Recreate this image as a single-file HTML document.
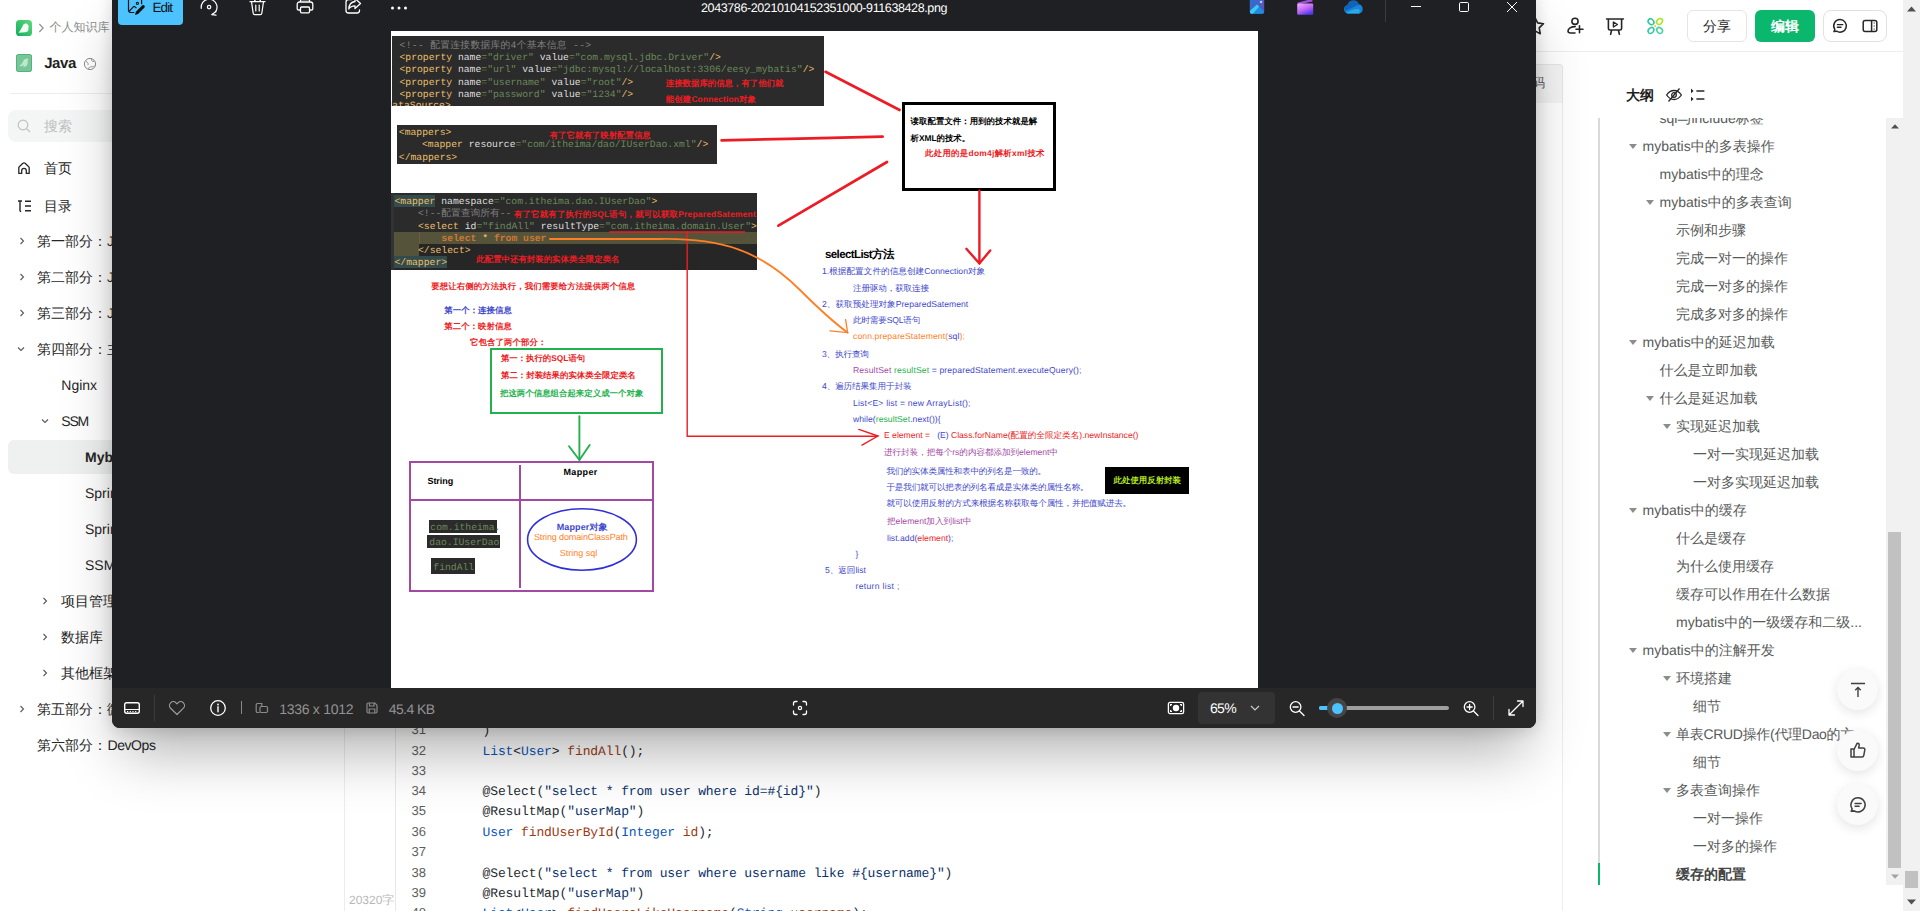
<!DOCTYPE html>
<html lang="zh">
<head>
<meta charset="utf-8">
<title>Java</title>
<style>
*{box-sizing:border-box;margin:0;padding:0}
html,body{width:1920px;height:911px;overflow:hidden;background:#fff;font-family:"Liberation Sans",sans-serif;}
body{position:relative;color:#262626;font-size:14px;text-rendering:geometricPrecision;}
.abs{position:absolute}
svg{position:absolute;overflow:visible}
/* ---------- left sidebar ---------- */
#side{position:absolute;left:0;top:0;width:345px;height:911px;background:#fff;border-right:1px solid #ececec}
#side .t{position:absolute;white-space:nowrap;height:20px;line-height:20px;font-size:14px;color:#262626}
#side .ar{position:absolute;width:10px;height:10px}
/* ---------- code ---------- */
#code{position:absolute;left:396px;top:0;width:1140px;height:911px}
#gut{position:absolute;left:395px;top:0;width:1px;height:911px;background:#e8e8e8}
.ln{position:absolute;left:411.5px;width:20px;height:20px;line-height:20px;font-size:13px;color:#5e5e5e;white-space:nowrap}
.cl{position:absolute;left:482.5px;height:20px;line-height:20px;font-family:"Liberation Mono",monospace;font-size:13px;letter-spacing:-.1px;white-space:pre;color:#24292e}
.cl .k{color:#0a54b8}.cl .f{color:#9a3a10}.cl .s{color:#0a3069}
/* ---------- outline ---------- */
.ol{position:absolute;height:20px;line-height:20px;font-size:14px;color:#585a5a;white-space:nowrap}
.tri{position:absolute;width:0;height:0;border-left:4px solid transparent;border-right:4px solid transparent;border-top:5px solid #8c8c8c}
.fab{position:absolute;width:41px;height:41px;border-radius:50%;background:#fafafa;box-shadow:0 3px 12px rgba(0,0,0,.11)}
/* ---------- viewer ---------- */
#viewer{position:absolute;left:112px;top:-10px;width:1424px;height:737.5px;background:#1f2023;border-radius:8px;box-shadow:0 34px 54px -10px rgba(0,0,0,.30),0 2px 16px rgba(0,0,0,.14);overflow:hidden}
.vt{position:absolute;white-space:nowrap;color:#fff;font-size:14px;line-height:20px;height:20px}
/* diagram text */
.d{position:absolute;white-space:nowrap;font-size:8.4px;line-height:12px;height:12px;font-weight:bold}
.dn{position:absolute;white-space:nowrap;font-size:8.6px;line-height:12px;height:12px;color:#3f48cc}
.m{position:absolute;white-space:pre;font-family:"Liberation Mono",monospace;font-size:9.74px;line-height:12px;height:12px;color:#a9b7c6;margin-top:1.3px}
.m .t{color:#e8bf6a}.m .a{color:#dcdcdc}.m .v{color:#6a8759}.m .c{color:#808080}
.red{color:#ed1c24}.blu{color:#3f48cc}.grn{color:#22b14c}.org{color:#ff7f27}.pur{color:#a349a4}
</style>
</head>
<body>
<div id="side">
  <!-- logo -->
  <svg style="left:16px;top:20px" width="16" height="16" viewBox="0 0 16 16"><defs><linearGradient id="lg1" x1="1" y1="0" x2="0" y2="1"><stop offset="0" stop-color="#62da7c"/><stop offset="1" stop-color="#0fae5e"/></linearGradient></defs><rect width="16" height="16" rx="3.600" fill="url(#lg1)"/><path d="M2.500 12.700C5 10 6 6.500 7.600 4.200c1-.8 2.600-.9 3.600-.4l1.500 2.300l-.4 4.500c-.6 1-1.600 1.500-2.800 1.600z" fill="#f2fbf5"/></svg>
  <svg style="left:37px;top:22px" width="8" height="12" viewBox="0 0 8 12"><path d="M2.300 2L6.200 6L2.300 10" fill="none" stroke="#8a8f8d" stroke-width="1.100"/></svg>
  <div class="t" style="width:60.02px;text-align-last:justify;left:49.5px;top:17.300px;color:#8a8f8d;font-size:12px">个人知识库</div>
  <!-- book -->
  <svg style="left:16px;top:54px" width="16" height="18" viewBox="0 0 16 18"><rect x=".5" y=".5" width="15" height="17" rx="1.600" fill="#76c797" stroke="#58b07e"/><path d="M2 12.700c2.500-1.200 4-3.600 5.200-6.200c.8-1.600 2.600-2.600 4.400-2.200l1.500 1.200l-1.200.6c.6 2 .2 4-1 5.600c-1 1.200-2.500 1.600-4.400 1.500l1-1.600c-1.500 1-3.500 1.400-5.500 1.100z" fill="#bce9cb" stroke="#6cbd8c" stroke-width=".5"/></svg>
  <div class="t" style="letter-spacing:-0.444px;width:31.62px;text-align-last:justify;left:44.2px;top:54px;font-size:15px;font-weight:bold;color:#1f1f1f">Java</div>
  <svg style="left:83px;top:57px" width="14" height="14" viewBox="0 0 14 14"><circle cx="7" cy="7" r="5.6" fill="none" stroke="#8a8f8d" stroke-width="1"/><path d="M3 4.5c1.5.5 2.5 1.5 2 3.5M8.5 1.8c-.5 1.7.5 2.7 2.5 2.7M5.5 12c.3-1.6 1.6-2.6 3.4-2.2c1 .2 1.8-.2 2.6-1.2" fill="none" stroke="#8a8f8d" stroke-width=".9"/></svg>
  <div class="abs" style="left:10px;top:93px;width:335px;height:1px;background:#ededed"></div>
  <!-- search -->
  <div class="abs" style="left:8px;top:110px;width:337px;height:32px;border-radius:8px;background:#f4f5f5"></div>
  <svg style="left:16px;top:118px" width="16" height="16" viewBox="0 0 16 16"><circle cx="7" cy="7" r="4.8" fill="none" stroke="#bfc2c1" stroke-width="1.2"/><path d="M10.6 10.6L14 14" stroke="#bfc2c1" stroke-width="1.2"/></svg>
  <div class="t" style="width:28.02px;text-align-last:justify;left:44px;top:116px;color:#bec0bf">搜索</div>
  <!-- nav -->
  <svg style="left:17px;top:161px" width="14" height="14" viewBox="0 0 14 14"><path d="M1.800 12.400V6.800c0-.600.200-1 .700-1.400L5.900 2.300c.600-.5 1.600-.5 2.200 0l3.400 3.100c.500.400.700.800.700 1.400v5.600H9.300V9.700a2.300 2.300 0 0 0-4.600 0v2.700z" fill="none" stroke="#262626" stroke-width="1.300" stroke-linejoin="round"/></svg>
  <div class="t" style="width:28.02px;text-align-last:justify;left:44px;top:158px">首页</div>
  <svg style="left:17px;top:199px" width="15" height="14" viewBox="0 0 15 14"><path d="M1 2h4M3 2v9.5c0 .8.4 1 1.2 1M8 2.2h6M8 7h6M8 11.8h6" fill="none" stroke="#262626" stroke-width="1.4"/></svg>
  <div class="t" style="width:28.02px;text-align-last:justify;left:44px;top:196px">目录</div>
  <!-- tree -->
  <div class="abs" style="left:8px;top:440px;width:337px;height:34px;border-radius:6px;background:#eff0f0"></div>
  <svg class="ar" style="left:17px;top:236px" viewBox="0 0 10 10"><path d="M3.5 2L6.5 5L3.5 8" fill="none" stroke="#585a5a" stroke-width="1.1"/></svg>
  <div class="t" style="width:127.60px;text-align-last:justify;left:37px;top:231px">第一部分：Java基础</div>
  <svg class="ar" style="left:17px;top:272px" viewBox="0 0 10 10"><path d="M3.5 2L6.5 5L3.5 8" fill="none" stroke="#585a5a" stroke-width="1.1"/></svg>
  <div class="t" style="width:128.13px;text-align-last:justify;left:37px;top:267px">第二部分：JavaWeb</div>
  <svg class="ar" style="left:17px;top:308px" viewBox="0 0 10 10"><path d="M3.5 2L6.5 5L3.5 8" fill="none" stroke="#585a5a" stroke-width="1.1"/></svg>
  <div class="t" style="width:118.27px;text-align-last:justify;left:37px;top:303px">第三部分：JavaEE</div>
  <svg class="ar" style="left:16px;top:344px" viewBox="0 0 10 10"><path d="M2 3.5L5 6.5L8 3.5" fill="none" stroke="#585a5a" stroke-width="1.1"/></svg>
  <div class="t" style="width:126.02px;text-align-last:justify;left:37px;top:339px">第四部分：主流框架</div>
  <div class="t" style="letter-spacing:0.001px;width:35.82px;text-align-last:justify;left:61.3px;top:375px">Nginx</div>
  <svg class="ar" style="left:40px;top:416px" viewBox="0 0 10 10"><path d="M2 3.5L5 6.5L8 3.5" fill="none" stroke="#585a5a" stroke-width="1.1"/></svg>
  <div class="t" style="letter-spacing:-1.181px;width:26.82px;text-align-last:justify;left:61.3px;top:411px">SSM</div>
  <div class="t" style="width:52.15px;text-align-last:justify;left:85px;top:447px;font-weight:bold">Mybatis</div>
  <div class="t" style="width:40.49px;text-align-last:justify;left:85px;top:483px">Spring</div>
  <div class="t" style="width:71.61px;text-align-last:justify;left:85px;top:519px">SpringMVC</div>
  <div class="t" style="width:58.36px;text-align-last:justify;left:85px;top:555px">SSM整合</div>
  <svg class="ar" style="left:40px;top:596px" viewBox="0 0 10 10"><path d="M3.5 2L6.5 5L3.5 8" fill="none" stroke="#585a5a" stroke-width="1.1"/></svg>
  <div class="t" style="width:56.02px;text-align-last:justify;left:61px;top:591px">项目管理</div>
  <svg class="ar" style="left:40px;top:632px" viewBox="0 0 10 10"><path d="M3.5 2L6.5 5L3.5 8" fill="none" stroke="#585a5a" stroke-width="1.1"/></svg>
  <div class="t" style="width:42.02px;text-align-last:justify;left:61px;top:627px">数据库</div>
  <svg class="ar" style="left:40px;top:668px" viewBox="0 0 10 10"><path d="M3.5 2L6.5 5L3.5 8" fill="none" stroke="#585a5a" stroke-width="1.1"/></svg>
  <div class="t" style="width:56.02px;text-align-last:justify;left:61px;top:663px">其他框架</div>
  <svg class="ar" style="left:17px;top:704px" viewBox="0 0 10 10"><path d="M3.5 2L6.5 5L3.5 8" fill="none" stroke="#585a5a" stroke-width="1.1"/></svg>
  <div class="t" style="width:112.02px;text-align-last:justify;left:37px;top:699px">第五部分：微服务</div>
  <div class="t" style="width:70.02px;text-align-last:justify;left:37px;top:735px">第六部分：</div><div class="t" style="letter-spacing:-0.430px;width:48.02px;text-align-last:justify;left:107.5px;top:735px">DevOps</div>
</div>
<div class="abs" style="left:349px;top:891px;font-size:12px;line-height:18px;color:#b8b8b8;white-space:nowrap">20320字</div>
<div id="gut"></div>

<!-- code -->
<div class="ln" style="top:720.4px">31</div>
<div class="cl" style="top:721.4px">)</div>
<div class="ln" style="top:740.7px">32</div>
<div class="cl" style="top:741.7px"><span class="k">List</span>&lt;<span class="k">User</span>&gt; <span class="f">findAll</span>();</div>
<div class="ln" style="top:760.7px">33</div>
<div class="ln" style="top:780.7px">34</div>
<div class="cl" style="top:781.7px">@Select(<span class="s">"select * from user where id=#{id}"</span>)</div>
<div class="ln" style="top:801.4px">35</div>
<div class="cl" style="top:802.4px">@ResultMap(<span class="s">"userMap"</span>)</div>
<div class="ln" style="top:822.1px">36</div>
<div class="cl" style="top:823.1px"><span class="k">User</span> <span class="f">findUserById</span>(<span class="k">Integer</span> <span class="f">id</span>);</div>
<div class="ln" style="top:842.1px">37</div>
<div class="ln" style="top:863.2px">38</div>
<div class="cl" style="top:864.2px">@Select(<span class="s">"select * from user where username like #{username}"</span>)</div>
<div class="ln" style="top:883.1px">39</div>
<div class="cl" style="top:884.1px">@ResultMap(<span class="s">"userMap"</span>)</div>
<div class="ln" style="top:903.4px">40</div>
<div class="cl" style="top:904.4px"><span class="k">List</span>&lt;<span class="k">User</span>&gt; <span class="f">findUsersLikeUsername</span>(<span class="k">String</span> <span class="f">username</span>);</div>
<!-- header right -->
<div class="abs" style="left:1536px;top:51px;width:367px;height:1px;background:#ededed"></div>
<div class="abs" style="left:1530px;top:64px;width:33px;height:39px;background:#f4f4f4;border:1px solid #e6e6e6;border-bottom:none;border-top-right-radius:4px"></div>
<div class="abs" style="left:1562px;top:103px;width:1px;height:808px;background:#ececec"></div>
<div class="abs" style="left:1533px;top:74px;font-size:13px;line-height:18px;color:#595959;width:12px;overflow:hidden;direction:rtl">码</div>
<svg style="left:1523.500px;top:15px" width="22" height="22" viewBox="0 0 22 22"><path d="M11 2.5l2.6 5.4l5.9.8l-4.3 4.1l1 5.9L11 15.9l-5.2 2.8l1-5.9L2.5 8.7l5.9-.8z" fill="none" stroke="#262626" stroke-width="1.6" stroke-linejoin="round"/></svg>
<svg style="left:1566px;top:16px" width="20" height="20" viewBox="0 0 20 20"><circle cx="9" cy="5.300" r="3.100" fill="none" stroke="#262626" stroke-width="1.600"/><path d="M9.200 10.600C5 10.600 2 12.700 2 15c0 1.400 1.200 2 2.600 2h4.400M13.500 9.800v7M10 13.300h7" fill="none" stroke="#262626" stroke-width="1.600" stroke-linecap="round"/></svg>
<svg style="left:1605px;top:16px" width="20" height="20" viewBox="0 0 20 20"><path d="M1.6 3h16.8M3.4 3v9.4c0 1 .6 1.6 1.6 1.6h10c1 0 1.6-.6 1.6-1.6V3M6.6 14.2l-1 4M13.4 14.2l1 4" fill="none" stroke="#262626" stroke-width="1.6" stroke-linecap="round"/><path d="M8.4 6l4 2.5l-4 2.5z" fill="none" stroke="#262626" stroke-width="1.4" stroke-linejoin="round"/></svg>
<svg style="left:1646px;top:17px" width="18" height="18" viewBox="0 0 18 18"><g fill="none" stroke-width="1.5"><ellipse cx="5" cy="4.7" rx="2.5" ry="3.2" transform="rotate(-45 5 4.7)" stroke="#2fc6a0"/><ellipse cx="13.6" cy="4.4" rx="2.5" ry="3.2" transform="rotate(45 13.6 4.4)" stroke="#a8e61a"/><ellipse cx="5" cy="13.4" rx="2.5" ry="3.2" transform="rotate(45 5 13.4)" stroke="#36c8a4"/><ellipse cx="13.6" cy="13.4" rx="2.5" ry="3.2" transform="rotate(-45 13.6 13.4)" stroke="#3fd3a4"/></g><circle cx="9.2" cy="9" r="1" fill="#f5d018"/></svg>
<div class="abs" style="left:1687px;top:10px;width:60px;height:32px;border:1px solid #e4e6e5;border-radius:6px;text-align:center;line-height:30px;font-size:14px;color:#262626">分享</div>
<div class="abs" style="left:1755px;top:10px;width:60px;height:32px;background:#0ab76c;border-radius:6px;text-align:center;line-height:32px;font-size:14px;color:#fff;font-weight:bold">编辑</div>
<div class="abs" style="left:1823px;top:10px;width:64px;height:32px;border:1px solid #e0e2e1;border-radius:8px"></div>
<svg style="left:1832px;top:18px" width="16" height="16" viewBox="0 0 16 16"><path d="M8 1.6a6.3 6.3 0 1 1-3.4 11.6L2 13.6l.8-2.2A6.3 6.3 0 0 1 8 1.600z" fill="none" stroke="#262626" stroke-width="1.5" stroke-linejoin="round"/><path d="M5.4 6.6h5.4M5.4 9.2h3.6" stroke="#262626" stroke-width="1.4" stroke-linecap="round"/></svg>
<svg style="left:1862px;top:18px" width="16" height="16" viewBox="0 0 16 16"><rect x="1.2" y="2.4" width="13.6" height="11.2" rx="2" fill="none" stroke="#262626" stroke-width="1.5"/><path d="M9.6 2.4v11.2" stroke="#262626" stroke-width="1.5"/><path d="M12.2 4.6v1M12.2 7.5v1M12.2 10.400v1" stroke="#262626" stroke-width="1.1"/></svg>
<!-- outline -->
<div class="ol" style="width:28.02px;text-align-last:justify;left:1626px;top:85px;font-weight:bold;color:#1f1f1f">大纲</div>
<svg style="left:1665px;top:87px" width="18" height="16" viewBox="0 0 18 16"><path d="M1.6 8c2-3 4.400-4.500 7.400-4.500s5.400 1.500 7.400 4.500c-2 3-4.400 4.500-7.400 4.500s-5.400-1.500-7.400-4.500z" fill="none" stroke="#262626" stroke-width="1.3"/><circle cx="9" cy="8" r="2.300" fill="none" stroke="#262626" stroke-width="1.3"/><path d="M14.500 1.500L3.500 14.500" stroke="#262626" stroke-width="1.3"/></svg>
<svg style="left:1690px;top:88px" width="16" height="14" viewBox="0 0 16 14"><path d="M1 .600l2.600 2.300L1 5.200zM1 8.700l2.600 2.300L1 13.300z" fill="#262626"/><path d="M6.400 3h8M6.400 11h8" stroke="#262626" stroke-width="1.500"/></svg>
<div class="abs" style="left:1580px;top:118px;width:306px;height:793px;overflow:hidden">
</div>
<div class="abs" id="olwrap" style="left:0;top:118px;width:1886px;height:793px;overflow:hidden"><div style="position:absolute;left:0;top:-118px">
<div class="ol" style="width:104.29px;text-align-last:justify;left:1659.5px;top:108px">sql与include标签</div>
<div class="ol" style="width:132.25px;text-align-last:justify;left:1642.5px;top:136px">mybatis中的多表操作</div>
<div class="tri" style="left:1629.0px;top:144px"></div>
<div class="ol" style="width:104.25px;text-align-last:justify;left:1659.5px;top:164px">mybatis中的理念</div>
<div class="ol" style="width:132.25px;text-align-last:justify;left:1659.5px;top:192px">mybatis中的多表查询</div>
<div class="tri" style="left:1646.0px;top:200px"></div>
<div class="ol" style="width:70.02px;text-align-last:justify;left:1676px;top:220px">示例和步骤</div>
<div class="ol" style="width:112.02px;text-align-last:justify;left:1676px;top:248px">完成一对一的操作</div>
<div class="ol" style="width:112.02px;text-align-last:justify;left:1676px;top:276px">完成一对多的操作</div>
<div class="ol" style="width:112.02px;text-align-last:justify;left:1676px;top:304px">完成多对多的操作</div>
<div class="ol" style="width:132.25px;text-align-last:justify;left:1642.5px;top:332px">mybatis中的延迟加载</div>
<div class="tri" style="left:1629.0px;top:340px"></div>
<div class="ol" style="width:98.02px;text-align-last:justify;left:1659.5px;top:360px">什么是立即加载</div>
<div class="ol" style="width:98.02px;text-align-last:justify;left:1659.5px;top:388px">什么是延迟加载</div>
<div class="tri" style="left:1646.0px;top:396px"></div>
<div class="ol" style="width:84.02px;text-align-last:justify;left:1676px;top:416px">实现延迟加载</div>
<div class="tri" style="left:1662.5px;top:424px"></div>
<div class="ol" style="width:126.02px;text-align-last:justify;left:1693px;top:444px">一对一实现延迟加载</div>
<div class="ol" style="width:126.02px;text-align-last:justify;left:1693px;top:472px">一对多实现延迟加载</div>
<div class="ol" style="width:104.25px;text-align-last:justify;left:1642.5px;top:500px">mybatis中的缓存</div>
<div class="tri" style="left:1629.0px;top:508px"></div>
<div class="ol" style="width:70.02px;text-align-last:justify;left:1676px;top:528px">什么是缓存</div>
<div class="ol" style="width:98.02px;text-align-last:justify;left:1676px;top:556px">为什么使用缓存</div>
<div class="ol" style="width:154.02px;text-align-last:justify;left:1676px;top:584px">缓存可以作用在什么数据</div>
<div class="ol" style="width:185.93px;text-align-last:justify;left:1676px;top:612px">mybatis中的一级缓存和二级...</div>
<div class="ol" style="width:132.25px;text-align-last:justify;left:1642.5px;top:640px">mybatis中的注解开发</div>
<div class="tri" style="left:1629.0px;top:648px"></div>
<div class="ol" style="width:56.02px;text-align-last:justify;left:1676px;top:668px">环境搭建</div>
<div class="tri" style="left:1662.5px;top:676px"></div>
<div class="ol" style="width:28.02px;text-align-last:justify;left:1693px;top:696px">细节</div>
<div class="ol" style="letter-spacing:-0.300px;width:178.02px;text-align-last:justify;left:1676px;top:724px">单表CRUD操作(代理Dao的方</div>
<div class="tri" style="left:1662.5px;top:732px"></div>
<div class="ol" style="width:28.02px;text-align-last:justify;left:1693px;top:752px">细节</div>
<div class="ol" style="width:84.02px;text-align-last:justify;left:1676px;top:780px">多表查询操作</div>
<div class="tri" style="left:1662.5px;top:788px"></div>
<div class="ol" style="width:70.02px;text-align-last:justify;left:1693px;top:808px">一对一操作</div>
<div class="ol" style="width:84.02px;text-align-last:justify;left:1693px;top:836px">一对多的操作</div>
<div class="ol" style="width:70.02px;text-align-last:justify;left:1676px;top:864px;font-weight:bold;color:#434545">缓存的配置</div>
</div></div>
<div class="abs" style="left:1598px;top:118px;width:2px;height:748px;background:#d9dbda"></div>
<div class="abs" style="left:1598px;top:863px;width:2px;height:22px;background:#0ab76c"></div>
<!-- fabs -->
<div class="fab" style="left:1837px;top:669px"></div>
<svg style="left:1849px;top:681px" width="18" height="18" viewBox="0 0 18 18"><path d="M2 2.500h14M9 16V6.500M6.200 9.200L9 6.400l2.800 2.800" fill="none" stroke="#404040" stroke-width="1.400"/></svg>
<div class="fab" style="left:1837px;top:730px"></div>
<svg style="left:1848px;top:740px" width="20" height="20" viewBox="0 0 20 20"><path d="M3 9h3v8H3zM6 9.500l3.200-6.300c1.300-.2 2.200.6 2 2L10.600 8h4.600c1.200 0 1.800.8 1.600 1.900l-1 5.500c-.2 1-.8 1.600-1.800 1.600H6" fill="none" stroke="#404040" stroke-width="1.500" stroke-linejoin="round"/></svg>
<div class="fab" style="left:1837px;top:784px"></div>
<svg style="left:1849px;top:796px" width="18" height="18" viewBox="0 0 16 16"><path d="M8 1.6a6.3 6.3 0 1 1-3.4 11.600L2 13.600l.800-2.200A6.300 6.300 0 0 1 8 1.600z" fill="none" stroke="#404040" stroke-width="1.400" stroke-linejoin="round"/><path d="M5.400 6.600h5.400M5.400 9.200h3.600" stroke="#404040" stroke-width="1.300" stroke-linecap="round"/></svg>
<!-- scrollbars -->
<div class="abs" style="left:1886px;top:118px;width:17px;height:767px;background:#f1f1f1"></div>
<div class="abs" style="left:1888px;top:532px;width:13px;height:336px;background:#c1c1c1"></div>
<svg style="left:1890.500px;top:124px" width="8" height="5" viewBox="0 0 8 5"><path d="M0 4.500L4 .300L8 4.500z" fill="#505050"/></svg>
<svg style="left:1890.500px;top:873.500px" width="8" height="5" viewBox="0 0 8 5"><path d="M0 .500L4 4.700L8 .500z" fill="#a3a3a3"/></svg>
<div class="abs" style="left:1903px;top:0;width:17px;height:911px;background:#f1f1f1"></div>
<div class="abs" style="left:1905px;top:871px;width:13px;height:17px;background:#c1c1c1"></div>
<svg style="left:1907px;top:6px" width="9" height="6" viewBox="0 0 9 6"><path d="M0 5.500L4.500 .500L9 5.500z" fill="#505050"/></svg>
<svg style="left:1907px;top:899px" width="9" height="6" viewBox="0 0 9 6"><path d="M0 .500L4.500 5.500L9 .500z" fill="#505050"/></svg>

<div id="viewer"><div class="abs" style="left:-112px;top:10px;width:0;height:0">
  <!-- title bar -->
  <div class="abs" style="left:118px;top:-6px;width:65px;height:31px;border-radius:4px;background:#4cc2ff"></div>
  <svg style="left:126px;top:-5px" width="22" height="22" viewBox="0 0 22 22"><path d="M15.600 9.300V5.500A2.500 2.500 0 0 0 13.100 3H5A2.500 2.500 0 0 0 2.500 5.500V15A2.500 2.500 0 0 0 5 17.500h3.300" fill="none" stroke="#111" stroke-width="1.200"/><path d="M3.300 16.200l4-4.400c.5-.5 1.200-.5 1.700 0l1.400 1.400" fill="none" stroke="#111" stroke-width="1.200"/><circle cx="11.400" cy="8.300" r="1.100" fill="none" stroke="#111" stroke-width="1.100"/><path d="M9 19.900l.9-3.100l6.200-6.200a1.550 1.550 0 0 1 2.200 2.200l-6.200 6.200z" fill="#111"/></svg>
  <div class="vt" style="letter-spacing:-0.941px;width:19.52px;text-align-last:justify;left:152.5px;top:-2.2px;color:#111;font-size:13.5px">Edit</div>
  <svg style="left:199px;top:-3px" width="20" height="20" viewBox="0 0 20 20"><path d="M2.300 11.300A7.900 7.900 0 1 1 13 17.500M17.200 14.500L12.800 17.600L17 18.200" fill="none" stroke="#fff" stroke-width="1.200" stroke-linecap="round" stroke-linejoin="round"/><circle cx="10.100" cy="10.100" r="1.700" fill="none" stroke="#fff" stroke-width="1.200"/></svg>
  <svg style="left:247px;top:-3px" width="20" height="20" viewBox="0 0 20 20"><path d="M3 4.700h15M4.500 4.700l1.700 11.600c.1.900.7 1.300 1.500 1.300h5.600c.8 0 1.400-.4 1.500-1.300L16.500 4.700M8.800 8v6M12.200 8v6M7.500 4.700c0-1.700 1.200-2.700 3-2.700s3 1 3 2.700" fill="none" stroke="#fff" stroke-width="1.200" stroke-linecap="round"/></svg>
  <svg style="left:294.8px;top:-3.600px" width="20" height="20" viewBox="0 0 20 20"><path d="M5.500 6V3.500h9V6M5.500 14H3.500c-.8 0-1.300-.5-1.300-1.300V8.300C2.200 6.900 3.100 6 4.500 6h11c1.400 0 2.300.900 2.300 2.300v4.400c0 .8-.5 1.300-1.300 1.300h-2" fill="none" stroke="#fff" stroke-width="1.300"/><rect x="5.500" y="11" width="9" height="5.800" rx="1" fill="none" stroke="#fff" stroke-width="1.300"/></svg>
  <svg style="left:342.600px;top:-3.600px" width="20" height="20" viewBox="0 0 20 20"><path d="M8.500 3.500H5.500A2.500 2.500 0 0 0 3 6v8.500A2.500 2.500 0 0 0 5.500 17h8.500a2.500 2.500 0 0 0 2.500-2.500V14" fill="none" stroke="#fff" stroke-width="1.300" stroke-linecap="round"/><path d="M12 2.500l5.500 5l-5.500 5V9.800c-3 0-5 1-6.200 3.200c.2-4 2.400-7 6.200-7.500z" fill="none" stroke="#fff" stroke-width="1.300" stroke-linejoin="round"/></svg>
  <svg style="left:390px;top:5.700px" width="18" height="4" viewBox="0 0 18 4"><circle cx="2.500" cy="2" r="1.500" fill="#fff"/><circle cx="9" cy="2" r="1.500" fill="#fff"/><circle cx="15.500" cy="2" r="1.500" fill="#fff"/></svg>
  <div class="vt" style="letter-spacing:-0.388px;width:246.02px;text-align-last:justify;left:701px;top:-2.5px;font-size:12.5px">2043786-20210104152351000-911638428.png</div>
  <!-- right icons -->
  <svg style="left:1249px;top:-2px" width="16" height="16" viewBox="0 0 16 16"><defs><linearGradient id="pg" x1="0" y1="0" x2="1" y2="1"><stop offset="0" stop-color="#2277d8"/><stop offset="1" stop-color="#6a4bb0"/></linearGradient><clipPath id="pc"><rect x=".8" y="-2" width="14.400" height="17.800" rx="2.200"/></clipPath></defs><g clip-path="url(#pc)"><rect x="0" y="-2" width="16" height="18" fill="url(#pg)"/><path d="M.8 13.200L8 6.600L15.200 13.400V16H.8z" fill="#1b8ee4"/><path d="M.8 13L8 6.600L10.200 8.600L3.600 16H.8z" fill="#3ccaf6"/></g><path d="M12 2.600l.5 1l1 .5l-1 .5l-.5 1l-.5-1l-1-.5l1-.5z" fill="#fff"/></svg>
  <svg style="left:1297px;top:-2px" width="17" height="17" viewBox="0 0 17 17"><defs><linearGradient id="cg" x1="0" y1="0" x2=".6" y2="1"><stop offset="0" stop-color="#f0b2ff"/><stop offset=".55" stop-color="#c46af2"/><stop offset="1" stop-color="#5638f2"/></linearGradient></defs><path d="M.4 4.800L15 .8l.6 2.800L1 6.400z" fill="#a04fe0"/><rect x=".2" y="5.600" width="16" height="11.200" rx="1.200" fill="url(#cg)"/></svg>
  <svg style="left:1343px;top:0px" width="21" height="14" viewBox="0 0 21 14"><path d="M5 13.500a4.200 4.200 0 0 1-.6-8.300A6 6 0 0 1 15.300 4.300a4.700 4.700 0 0 1 1 9.200z" fill="#1784d9"/><path d="M2 11c4-2 9-4 14-6.600A6 6 0 0 0 4.400 5.200A4.200 4.200 0 0 0 2 11z" fill="#0f63b8"/><path d="M3 13c4-2.500 9-4.500 13.300-3.800a4.700 4.700 0 0 1 0 4.300H5c-.8 0-1.500-.2-2-.5z" fill="#29a8ec"/></svg>
  <div class="abs" style="left:1385px;top:-10px;width:1px;height:32px;background:#3a3b3e"></div>
  <svg style="left:1410px;top:1px" width="12" height="12" viewBox="0 0 12 12"><path d="M1 5.500h10" stroke="#fff" stroke-width="1"/></svg>
  <svg style="left:1459px;top:2px" width="10" height="10" viewBox="0 0 10 10"><rect x=".5" y=".5" width="9" height="9" rx="1.200" fill="none" stroke="#fff" stroke-width="1"/></svg>
  <svg style="left:1506px;top:1px" width="12" height="12" viewBox="0 0 12 12"><path d="M1 1l10 10M11 1L1 11" stroke="#fff" stroke-width="1"/></svg>
  <!-- image -->
  <div class="abs" style="left:391px;top:31px;width:867px;height:657px;background:#fff;overflow:hidden"><div class="abs" style="left:-391px;top:-31px;width:0;height:0">
<div class="abs" style="left:392px;top:36.3px;width:432px;height:69.6px;background:#2b2b2b"></div>
<div class="m" style="letter-spacing:0.306px;width:192.02px;text-align-last:justify;left:399.5px;top:38.3px;white-space:nowrap"><span class="c">&lt;!-- 配置连接数据库的4个基本信息 --&gt;</span></div>
<div class="m" style="left:399.5px;top:50.8px"><span class="t">&lt;property </span><span class="a">name</span><span class="v">="driver" </span><span class="a">value</span><span class="v">="com.mysql.jdbc.Driver"</span><span class="t">/&gt;</span></div>
<div class="m" style="left:399.5px;top:63.0px"><span class="t">&lt;property </span><span class="a">name</span><span class="v">="url" </span><span class="a">value</span><span class="v">="jdbc:mysql://localhost:3306/eesy_mybatis"</span><span class="t">/&gt;</span></div>
<div class="m" style="left:399.5px;top:75.3px"><span class="t">&lt;property </span><span class="a">name</span><span class="v">="username" </span><span class="a">value</span><span class="v">="root"</span><span class="t">/&gt;</span></div>
<div class="m" style="left:399.5px;top:87.6px"><span class="t">&lt;property </span><span class="a">name</span><span class="v">="password" </span><span class="a">value</span><span class="v">="1234"</span><span class="t">/&gt;</span></div>
<div class="abs" style="left:391px;top:99px;width:80px;height:6.8px;overflow:hidden"><div class="m" style="left:-4.500px;top:.200px"><span class="t">dataSource&gt;</span></div></div>
<div class="d red" style="letter-spacing:0.025px;width:117.62px;text-align-last:justify;left:665.8px;top:76.6px">连接数据库的信息，有了他们就</div>
<div class="d red" style="letter-spacing:0.157px;width:90.32px;text-align-last:justify;left:665.8px;top:93.0px">能创建Connection对象</div>
<div class="abs" style="left:397px;top:125px;width:319.6px;height:38.6px;background:#2b2b2b"></div>
<div class="m" style="left:398.8px;top:125.9px"><span class="t">&lt;mappers&gt;</span></div>
<div class="m" style="left:422px;top:138.1px"><span class="t">&lt;mapper </span><span class="a">resource</span><span class="v">="com/itheima/dao/IUserDao.xml"</span><span class="t">/&gt;</span></div>
<div class="m" style="left:398.8px;top:150.6px"><span class="t">&lt;/mappers&gt;</span></div>
<div class="d red" style="letter-spacing:0.050px;width:101.12px;text-align-last:justify;left:549.7px;top:129.0px">有了它就有了映射配置信息</div>
<div class="abs" style="left:391px;top:193px;width:366.4px;height:76.6px;background:#2b2b2b"></div>
<div class="abs" style="left:391px;top:244px;width:366.4px;height:25.6px;background:#262626"></div>
<div class="abs" style="left:394px;top:244px;width:24.6px;height:12px;background:#55533a"></div>
<div class="abs" style="left:394px;top:231.8px;width:363.4px;height:12.2px;background:#55533a"></div>
<div class="abs" style="left:419.4px;top:232px;width:1px;height:12px;background:#62603f"></div>
<div class="abs" style="left:391px;top:193px;width:3px;height:76.6px;background:#313335"></div>
<div class="abs" style="left:394px;top:194.8px;width:41.2px;height:12.1px;background:#344b4b"></div>
<div class="abs" style="left:394px;top:256.3px;width:53px;height:12.2px;background:#344b4b"></div>
<div class="m" style="left:394.5px;top:194.8px"><span class="t">&lt;mapper </span><span class="a">namespace</span><span class="v">="com.itheima.dao.IUserDao"</span><span class="t">&gt;</span></div>
<div class="m" style="letter-spacing:-0.006px;width:93.42px;text-align-last:justify;left:418px;top:207.0px;white-space:nowrap"><span class="c">&lt;!--配置查询所有--</span></div>
<div class="m" style="left:418px;top:219.3px"><span class="t">&lt;select </span><span class="a">id</span><span class="v">="findAll" </span><span class="a">resultType</span><span class="v">="com.itheima.domain.User"</span><span class="t">&gt;</span></div>
<div class="m" style="left:441.3px;top:231.6px"><span style="color:#cc7832;font-weight:bold">select</span> <span style="color:#ffc66d">*</span> <span style="color:#cc7832;font-weight:bold">from user</span></div>
<div class="m" style="left:418px;top:243.8px"><span class="t">&lt;/select&gt;</span></div>
<div class="m" style="left:394.5px;top:256.0px"><span class="t">&lt;/mapper&gt;</span></div>
<div class="d red" style="letter-spacing:0.236px;width:242.12px;text-align-last:justify;left:513.9px;top:207.5px">有了它就有了执行的SQL语句，就可以获取PreparedSatement</div>
<div class="d red" style="letter-spacing:0.049px;width:143.22px;text-align-last:justify;left:476.3px;top:253.0px">此配置中还有封装的实体类全限定类名</div>
<div class="d red" style="letter-spacing:0.125px;width:204.02px;text-align-last:justify;left:431.3px;top:280.4px">要想让右侧的方法执行，我们需要给方法提供两个信息</div>
<div class="d blu" style="letter-spacing:0.075px;width:67.62px;text-align-last:justify;left:444.3px;top:303.6px">第一个：连接信息</div>
<div class="d red" style="letter-spacing:0.075px;width:67.62px;text-align-last:justify;left:444.3px;top:319.9px">第二个：映射信息</div>
<div class="d red" style="letter-spacing:0.125px;width:76.52px;text-align-last:justify;left:470px;top:336.2px">它包含了两个部分：</div>
<div class="abs" style="left:490px;top:348px;width:173px;height:66px;border:2px solid #22b14c"></div>
<div class="d red" style="letter-spacing:-0.002px;width:84.22px;text-align-last:justify;left:501px;top:352.4px">第一：执行的SQL语句</div>
<div class="d red" style="letter-spacing:0.050px;width:134.82px;text-align-last:justify;left:501px;top:368.7px">第二：封装结果的实体类全限定类名</div>
<div class="d grn" style="letter-spacing:0.054px;width:143.32px;text-align-last:justify;left:500px;top:386.7px">把这两个信息组合起来定义成一个对象</div>
<div class="abs" style="left:409px;top:460.6px;width:245.3px;height:131.3px;border:2px solid #a349a4"></div>
<div class="abs" style="left:409.5px;top:499.1px;width:244.8px;height:2px;background:#a349a4"></div>
<div class="abs" style="left:518.6px;top:465px;width:2px;height:123px;background:#a349a4"></div>
<div class="d" style="letter-spacing:-0.067px;width:25.62px;text-align-last:justify;left:427.5px;top:475.3px;color:#000;font-size:9px">String</div>
<div class="d" style="letter-spacing:0.381px;width:34.32px;text-align-last:justify;left:563.4px;top:466.0px;color:#000;font-size:9px">Mapper</div>
<div class="abs" style="left:428.8px;top:520.1px;width:68.3px;height:12.5px;background:#2b2b2b"></div>
<div class="abs" style="left:426.8px;top:535.1px;width:73.3px;height:12.5px;background:#2b2b2b"></div>
<div class="abs" style="left:431.3px;top:558.2px;width:43.3px;height:15.7px;background:#2b2b2b"></div>
<div class="m" style="left:430.3px;top:520.6px"><span class="v">com.itheima.</span></div>
<div class="m" style="left:429.3px;top:535.6px"><span class="v">dao.IUserDao</span></div>
<div class="m" style="left:433.3px;top:560.5px"><span class="v">findAll</span></div>
<div class="d blu" style="letter-spacing:0.123px;width:51.02px;text-align-last:justify;left:556.7px;top:521.0px;font-size:9px">Mapper对象</div>
<div class="dn org" style="letter-spacing:-0.126px;width:93.82px;text-align-last:justify;left:533.9px;top:531.0px;font-size:9px">String domainClassPath</div>
<div class="dn org" style="letter-spacing:-0.003px;width:37.52px;text-align-last:justify;left:559.7px;top:547.0px;font-size:9px">String sql</div>
<div class="abs" style="left:901.9px;top:102px;width:154.1px;height:88.7px;border:3px solid #000"></div>
<div class="d" style="letter-spacing:0.072px;width:126.72px;text-align-last:justify;left:910.6px;top:115.4px;color:#000">读取配置文件：用到的技术就是解</div>
<div class="d" style="letter-spacing:-0.020px;width:59.42px;text-align-last:justify;left:910.6px;top:131.6px;color:#000">析XML的技术。</div>
<div class="d red" style="letter-spacing:0.313px;width:119.82px;text-align-last:justify;left:925px;top:146.6px">此处用的是dom4j解析xml技术</div>
<div class="d" style="letter-spacing:-0.597px;width:68.92px;text-align-last:justify;left:825px;top:247.5px;color:#000;font-size:11.5px;line-height:14px;height:14px">selectList方法</div>
<div class="dn" style="letter-spacing:0.033px;width:163.22px;text-align-last:justify;left:822px;top:265.3px">1.根据配置文件的信息创建Connection对象</div>
<div class="dn" style="letter-spacing:-0.160px;width:75.92px;text-align-last:justify;left:853px;top:282.0px">注册驱动，获取连接</div>
<div class="dn" style="letter-spacing:0.021px;width:146.22px;text-align-last:justify;left:822px;top:297.8px">2、获取预处理对象PreparedSatement</div>
<div class="dn" style="letter-spacing:-0.185px;width:67.12px;text-align-last:justify;left:853px;top:314.0px">此时需要SQL语句</div>
<div class="dn" style="letter-spacing:0.113px;width:112.02px;text-align-last:justify;left:853px;top:330.4px"><span class="org">conn.prepareStatement(</span>sql<span class="org">);</span></div>
<div class="dn" style="letter-spacing:-0.158px;width:46.82px;text-align-last:justify;left:822px;top:347.9px">3、执行查询</div>
<div class="dn" style="letter-spacing:0.139px;width:228.62px;text-align-last:justify;left:853px;top:364.0px"><span class="pur">ResultSet</span> <span class="grn">resultSet</span> = preparedStatement.executeQuery();</div>
<div class="dn" style="letter-spacing:-0.120px;width:89.42px;text-align-last:justify;left:822px;top:380.4px">4、遍历结果集用于封装</div>
<div class="dn" style="letter-spacing:0.199px;width:117.72px;text-align-last:justify;left:853px;top:396.7px">List&lt;E&gt; list = new ArrayList();</div>
<div class="dn" style="letter-spacing:0.051px;width:87.72px;text-align-last:justify;left:853px;top:413.0px">while(<span class="grn">resultSet</span>.next()){</div>
<div class="dn" style="letter-spacing:-0.007px;width:254.42px;text-align-last:justify;left:884px;top:429.2px"><span class="red">E element =&nbsp;&nbsp; </span>(E)<span class="red"> Class.forName(配置的全限定类名).newInstance()</span></div>
<div class="dn" style="letter-spacing:-0.057px;width:173.82px;text-align-last:justify;left:884px;top:445.5px"><span class="pur">进行封装，把每个rs的内容都添加到element中</span></div>
<div class="dn" style="letter-spacing:-0.194px;width:159.62px;text-align-last:justify;left:886.4px;top:464.8px">我们的实体类属性和表中的列名是一致的。</div>
<div class="dn" style="letter-spacing:-0.173px;width:202.12px;text-align-last:justify;left:886.4px;top:481.0px">于是我们就可以把表的列名看成是实体类的属性名称。</div>
<div class="dn" style="letter-spacing:-0.159px;width:244.62px;text-align-last:justify;left:886.4px;top:497.3px">就可以使用反射的方式来根据名称获取每个属性，并把值赋进去。</div>
<div class="dn" style="letter-spacing:0.022px;width:84.42px;text-align-last:justify;left:887px;top:515.4px"><span class="pur">把element加入到list中</span></div>
<div class="dn" style="letter-spacing:0.027px;width:66.42px;text-align-last:justify;left:887px;top:531.6px">list.add(<span class="red">element</span>);</div>
<div class="dn" style="left:855.6px;top:547.9px">}</div>
<div class="dn" style="letter-spacing:-0.035px;width:40.82px;text-align-last:justify;left:825px;top:564.2px">5、返回list</div>
<div class="dn" style="letter-spacing:0.298px;width:44.02px;text-align-last:justify;left:855.6px;top:580.4px">return list ;</div>
<div class="abs" style="left:1104.8px;top:466.5px;width:84px;height:27.1px;background:#000"></div>
<div class="d" style="letter-spacing:0.037px;width:67.32px;text-align-last:justify;left:1113.6px;top:474.0px;color:#b5e61d">此处使用反射封装</div>
<svg style="left:0;top:0" width="1300" height="700" viewBox="0 0 1300 700">
<g fill="none" stroke="#ed1c24" stroke-width="2.700" stroke-linecap="round">
<path d="M825.5 71.800L899.600 110"/>
<path d="M721.600 140.400L800 138.600L882.600 136.600"/>
<path d="M887 162L778.400 225.700"/>
</g>
<g fill="none" stroke="#ed1c24" stroke-width="2.400" stroke-linecap="round">
<path d="M979.400 190.700V263"/>
<path d="M966.400 248.800L979.400 263.500L990.200 250.500"/>
<path d="M609.700 232H744.600" stroke-width="1.400"/>
<path d="M687.200 232V436.300H877.600" stroke-width="1.400"/>
<path d="M858.800 429.400L878 436L862 445.200" stroke-width="1.400"/>
</g>
<g fill="none" stroke="#ff7f27" stroke-width="1.800" stroke-linecap="round">
<path d="M550 239H660C720 238 760 250 800 290C822 312 836 324 847.600 332.600"/>
<path d="M845.600 319.600L847.600 332.600L830 330.900" stroke-width="1.300"/>
</g>
<g fill="none" stroke="#22b14c" stroke-width="1.900" stroke-linecap="round">
<path d="M579.400 416.300V460"/>
<path d="M569 446.300L579.400 460L589.700 445"/>
</g>
<ellipse cx="582" cy="539.500" rx="54.400" ry="30.700" fill="none" stroke="#3030d8" stroke-width="1.600"/>
</svg>
  </div></div>
  <!-- bottom bar -->
  <div class="abs" style="left:112px;top:687.7px;width:1424px;height:40px;background:#272727"></div>
  <svg style="left:122px;top:698px" width="20" height="20" viewBox="0 0 20 20"><rect x="2.700" y="4.700" width="14.600" height="10.600" rx="2" fill="none" stroke="#fff" stroke-width="1.400"/><path d="M2.700 11.500h14.600" stroke="#fff" stroke-width="1.200"/><path d="M5 13.600h1.200M7.700 13.600h1.200M10.400 13.600h1.200M13.100 13.600h1.200" stroke="#fff" stroke-width="1.200"/></svg>
  <div class="abs" style="left:154px;top:695px;width:1px;height:26px;background:#3b3b3b"></div>
  <svg style="left:167px;top:698px" width="20" height="20" viewBox="0 0 20 20"><path d="M10 16.500L3.600 10.200a3.800 3.800 0 0 1 5.400-5.400l1 1l1-1a3.800 3.800 0 0 1 5.400 5.400z" fill="none" stroke="#9a9a9a" stroke-width="1.200" stroke-linejoin="round"/></svg>
  <svg style="left:208px;top:698px" width="20" height="20" viewBox="0 0 20 20"><circle cx="10" cy="10" r="7.300" fill="none" stroke="#fff" stroke-width="1.300"/><path d="M10 8.800v5" stroke="#fff" stroke-width="1.400" stroke-linecap="round"/><circle cx="10" cy="6.500" r=".9" fill="#fff"/></svg>
  <div class="abs" style="left:241px;top:701px;width:1px;height:13px;background:#8a8a8a"></div>
  <svg style="left:254px;top:701px" width="16" height="14" viewBox="0 0 16 14"><path d="M5.500 2.500H3.500c-.8 0-1.300.5-1.300 1.300v6.400c0 .8.500 1.300 1.300 1.300h2M5.500 2.500h2.300v3" fill="none" stroke="#8a8a8a" stroke-width="1.200"/><rect x="6" y="5.500" width="7.500" height="6" rx="1.200" fill="none" stroke="#8a8a8a" stroke-width="1.200"/></svg>
  <div class="vt" style="letter-spacing:-0.280px;width:74.02px;text-align-last:justify;left:279.2px;top:698.5px;color:#939393">1336 x 1012</div>
  <svg style="left:365px;top:701px" width="14" height="14" viewBox="0 0 14 14"><path d="M2 3.200c0-.7.500-1.200 1.200-1.200h6.600L12 4.200v6.600c0 .7-.5 1.200-1.200 1.200H3.200c-.7 0-1.200-.5-1.200-1.200zM4.500 2v3h4.500V2M4.200 12V8h5.600v4" fill="none" stroke="#8a8a8a" stroke-width="1.200"/></svg>
  <div class="vt" style="letter-spacing:-0.575px;width:45.82px;text-align-last:justify;left:388.7px;top:698.5px;color:#939393">45.4 KB</div>
  <svg style="left:790px;top:698px" width="20" height="20" viewBox="0 0 20 20"><path d="M3.500 7V5.500c0-1.200.8-2 2-2H7M13 3.500h1.500c1.200 0 2 .8 2 2V7M16.500 13v1.500c0 1.200-.8 2-2 2H13M7 16.500H5.500c-1.200 0-2-.8-2-2V13" fill="none" stroke="#fff" stroke-width="1.300" stroke-linecap="round"/><circle cx="10" cy="10" r="1.600" fill="none" stroke="#fff" stroke-width="1.300"/></svg>
  <svg style="left:1166px;top:698px" width="20" height="20" viewBox="0 0 20 20"><rect x="2.400" y="4.400" width="15.200" height="11.200" rx="1.600" fill="none" stroke="#fff" stroke-width="1.300"/><circle cx="10" cy="10" r="3.200" fill="#fff"/><path d="M4.600 8V6.600H6M14 6.600h1.400V8M15.400 12v1.400H14M6 13.400H4.600V12" fill="none" stroke="#fff" stroke-width="1.100"/></svg>
  <div class="abs" style="left:1198px;top:692px;width:77px;height:32px;border-radius:4px;background:#333333"></div>
  <div class="vt" style="letter-spacing:-0.677px;width:26.02px;text-align-last:justify;left:1210px;top:698px;">65%</div>
  <svg style="left:1249px;top:703px" width="12" height="10" viewBox="0 0 12 10"><path d="M2 3l4 4l4-4" fill="none" stroke="#cfcfcf" stroke-width="1.100"/></svg>
  <svg style="left:1287px;top:698px" width="20" height="20" viewBox="0 0 20 20"><circle cx="8.600" cy="9" r="5.300" fill="none" stroke="#fff" stroke-width="1.300"/><path d="M12.500 13l4.500 4.500M6 9h5.200" stroke="#fff" stroke-width="1.300" stroke-linecap="round"/></svg>
  <div class="abs" style="left:1319px;top:706px;width:130px;height:4px;border-radius:2px;background:#9e9e9e"></div>
  <div class="abs" style="left:1319px;top:706px;width:16px;height:4px;border-radius:2px;background:#4cc2ff"></div>
  <div class="abs" style="left:1327px;top:698px;width:20px;height:20px;border-radius:50%;background:#454545"></div>
  <div class="abs" style="left:1331.500px;top:702.500px;width:11px;height:11px;border-radius:50%;background:#4cc2ff"></div>
  <svg style="left:1461px;top:698px" width="20" height="20" viewBox="0 0 20 20"><circle cx="8.600" cy="9" r="5.300" fill="none" stroke="#fff" stroke-width="1.300"/><path d="M12.500 13l4.500 4.500M6 9h5.200M8.600 6.400v5.200" stroke="#fff" stroke-width="1.300" stroke-linecap="round"/></svg>
  <div class="abs" style="left:1493px;top:696px;width:1px;height:24px;background:#3d3d3d"></div>
  <svg style="left:1506px;top:698px" width="20" height="20" viewBox="0 0 20 20"><path d="M11.500 3h5.500v5.500M17 3L3 17M3 11.500V17h5.500" fill="none" stroke="#fff" stroke-width="1.300" stroke-linecap="round" stroke-linejoin="round"/></svg>

</div></div>

</body>
</html>
